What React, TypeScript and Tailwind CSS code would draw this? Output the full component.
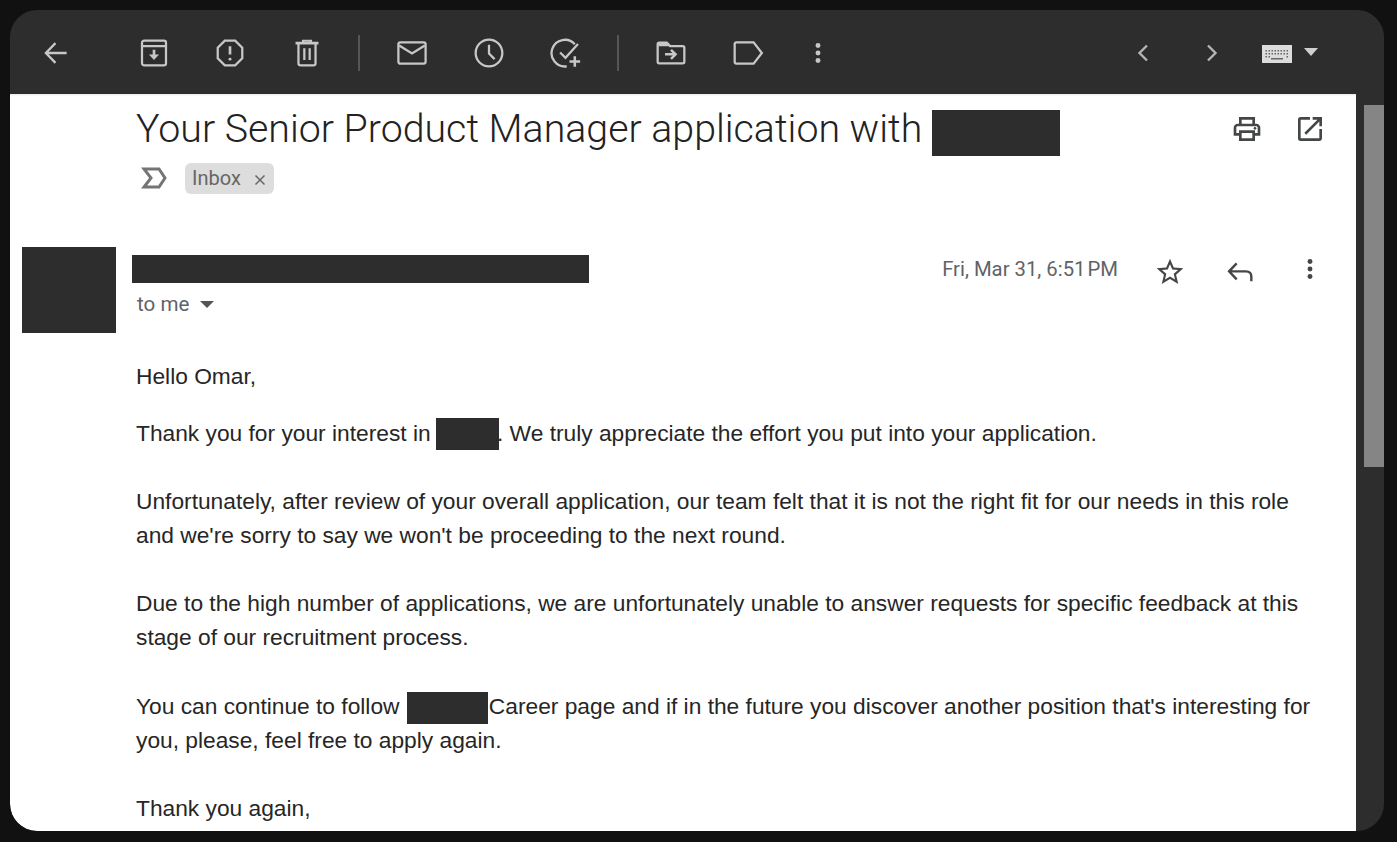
import React from "react";

const S = ({ children, size = 32, className = "" }: { children: React.ReactNode; size?: number; className?: string }) => (
  <svg width={size} height={size} viewBox="0 0 24 24" fill="none" stroke="currentColor" strokeWidth={1.7} className={className}>
    {children}
  </svg>
);

const Btn = ({ children }: { children: React.ReactNode }) => (
  <div className="w-[77px] h-[32px] flex items-center justify-center shrink-0">{children}</div>
);

const Sep = () => <div className="w-[2px] h-[36px] bg-[#565656] shrink-0" />;

const Dots = ({ fill = "currentColor" }: { fill?: string }) => (
  <svg width="32" height="32" viewBox="0 0 24 24" fill={fill}>
    <circle cx="12" cy="6.4" r="1.85" />
    <circle cx="12" cy="12" r="1.85" />
    <circle cx="12" cy="17.6" r="1.85" />
  </svg>
);

const Redact = ({ className }: { className: string }) => <span className={"bg-[#2d2d2d] " + className} />;

export default function App() {
  return (
    <div className="h-screen bg-[#111111] pt-[10px] pl-[10px] pr-[13px] pb-[11px] overflow-hidden">
      <div className="h-full rounded-[27px] overflow-hidden flex flex-col bg-[#2d2d2d]">
        <div className="h-[84px] shrink-0 flex items-center pl-[7.5px] pr-[66px] text-[#c7c7c7] pt-[2px]">
          <Btn>
            <S><path d="M20 12H4.6M11.6 4.6 4.4 12l7.2 7.4" /></S>
          </Btn>
          <div className="w-[20px] shrink-0" />
          <Btn>
            <S className="translate-x-[1px]">
              <rect x="3" y="2.8" width="18" height="18.4" rx="1.6" />
              <path d="M3 6.8h18" />
              <path d="M12 9.6v6" strokeWidth={2} />
              <path d="M8.2 13.2h7.6L12 17.2z" fill="currentColor" stroke="none" />
            </S>
          </Btn>
          <Btn>
            <S>
              <path d="M8.1 2.8h7.8l5.3 5.3v7.8l-5.3 5.3H8.1l-5.3-5.3V8.1z" />
              <path d="M12 7v6.2" strokeWidth={2} />
              <circle cx="12" cy="16.6" r="1.1" fill="currentColor" stroke="none" />
            </S>
          </Btn>
          <Btn>
            <S>
              <path d="M3.4 4.6h17.2" strokeWidth={2} />
              <path d="M9 4.4V2.8h6v1.6" strokeWidth={1.6} />
              <path d="M5.6 5v14.6c0 .9.7 1.6 1.6 1.6h9.6c.9 0 1.6-.7 1.6-1.6V5" />
              <path d="M10 8.4v8.8M14 8.4v8.8" />
            </S>
          </Btn>
          <div className="w-[12px] shrink-0" />
          <Sep />
          <div className="w-[14px] shrink-0" />
          <Btn>
            <S>
              <rect x="1.8" y="4" width="20.4" height="16" rx="1.4" />
              <path d="M2.4 6.4 12 12.4l9.6-6" />
            </S>
          </Btn>
          <Btn>
            <S>
              <circle cx="12" cy="12" r="10" />
              <path d="M12 5.8v6.6l4.2 4.2" />
            </S>
          </Btn>
          <Btn>
            <S>
              <path d="M18.6 5.4A10 10 0 1 0 12.6 22" />
              <path d="m7.6 11.6 4 4L21 5.2" />
              <path d="M18.6 14.4v8M14.6 18.4h8" strokeWidth={1.9} />
            </S>
          </Btn>
          <div className="w-[12px] shrink-0" />
          <Sep />
          <div className="w-[14px] shrink-0" />
          <Btn>
            <S>
              <path d="M2 18.6V5.4c0-.7.5-1.2 1.2-1.2h5.6l2.6 2.6h9.4c.7 0 1.2.5 1.2 1.2v10.6c0 .7-.5 1.2-1.2 1.2H3.2C2.5 19.8 2 19.3 2 18.6z" />
              <path d="M2.6 4.5h6.2l2.4 2.4H2.6z" fill="currentColor" stroke="none" />
              <path d="M7.5 13h7" strokeWidth={1.9} />
              <path d="m12 9.6 3.4 3.4-3.4 3.4" strokeWidth={1.9} />
            </S>
          </Btn>
          <Btn>
            <S>
              <path d="M2 5.4C2 4.6 2.6 4 3.4 4h12.8L22.4 12l-6.2 8H3.4C2.6 20 2 19.4 2 18.6z" />
            </S>
          </Btn>
          <div className="ml-[15px] w-[32px] flex justify-center shrink-0"><Dots /></div>
          <div className="flex-1" />
          <svg width="16" height="20" viewBox="0 0 16 20" fill="none" stroke="#b4b4b4" strokeWidth="2.4">
            <path d="M12 2.5 4.5 10l7.5 7.5" />
          </svg>
          <div className="w-[53px]" />
          <svg width="16" height="20" viewBox="0 0 16 20" fill="none" stroke="#b4b4b4" strokeWidth="2.4">
            <path d="M4 2.5 11.5 10 4 17.5" />
          </svg>
          <div className="w-[42px]" />
          <svg width="30" height="18" viewBox="0 0 30 18" className="mt-[1px]">
            <rect width="30" height="18" fill="#dcdcdc" />
            <g fill="#666666">
              <path d="M3.5 5H5v1.5H3.5zM6.5 5H8v1.5H6.5zM9.5 5H11v1.5H9.5zM12.5 5H14v1.5h-1.5zM15.5 5H17v1.5h-1.5zM18.5 5H20v1.5h-1.5zM21.5 5H23v1.5h-1.5zM24.5 5H26v1.5h-1.5z" />
              <path d="M3.5 8H5v1.5H3.5zM6.5 8H8v1.5H6.5zM9.5 8H11v1.5H9.5zM12.5 8H14v1.5h-1.5zM15.5 8H17v1.5h-1.5zM18.5 8H20v1.5h-1.5zM21.5 8H23v1.5h-1.5zM24.5 8H26v1.5h-1.5z" />
              <path d="M3.5 11H5v1.5H3.5zM6.5 11H8v1.5H6.5zM9 13h12v1.5H9zM24.5 11H26v1.5h-1.5z" />
            </g>
          </svg>
          <div className="w-[12px]" />
          <svg width="14" height="8" viewBox="0 0 14 8" fill="#d0d0d0" className="mb-[3px]">
            <path d="M0 0h14L7 8z" />
          </svg>
        </div>

        <div className="flex-1 flex min-h-0">
          <div className="flex-1 bg-white rounded-bl-[27px] overflow-hidden relative shadow-[inset_0_3px_3px_-3px_rgba(0,0,0,0.2)]">
            <div className="pl-[126px] pr-[30px] pt-[16px] flex items-start font-['Roboto',sans-serif]">
              <div className="flex items-center text-[39.3px] leading-[38px] font-light text-[#222222] flex-1 whitespace-nowrap">
                <span className="pb-[8px]">Your Senior Product Manager application with</span>
                <Redact className="inline-block w-[128px] h-[46px] ml-[10px]" />
              </div>
              <div className="flex items-center gap-[31px] text-[#444746] pt-[3px]">
                <svg width="32" height="32" viewBox="0 0 24 24" fill="currentColor">
                  <path d="M19 8h-1V3H6v5H5c-1.66 0-3 1.34-3 3v6h4v4h12v-4h4v-6c0-1.66-1.34-3-3-3zM8 5h8v3H8V5zm8 12v2H8v-4h8v2zm2-2v-2H6v2H4v-4c0-.55.45-1 1-1h14c.55 0 1 .45 1 1v4h-2z" />
                  <circle cx="18" cy="11.5" r="1" />
                </svg>
                <svg width="32" height="32" viewBox="0 0 24 24" fill="currentColor">
                  <path d="M19 19H5V5h7V3H5a2 2 0 0 0-2 2v14a2 2 0 0 0 2 2h14c1.1 0 2-.9 2-2v-7h-2v7zM14 3v2h3.59l-9.83 9.83 1.41 1.41L19 6.41V10h2V3h-7z" />
                </svg>
              </div>
            </div>

            <div className="pl-[131px] flex items-center mt-[6px] h-[32px]">
              <svg width="28" height="24" viewBox="0 0 28 24" fill="none" stroke="#757575" strokeWidth="3">
                <path d="M3 3h15l6 9-6 9H3l7-9z" />
              </svg>
              <div className="ml-[16px] h-[31px] w-[89px] rounded-[6px] bg-[#dddddd] flex items-center pl-[7px] text-[#666666] font-['Roboto',sans-serif] text-[20px]">
                <span>Inbox</span>
                <svg width="12" height="12" viewBox="0 0 12 12" stroke="#666666" strokeWidth="1.5" className="ml-[13px] mt-[3px]">
                  <path d="M1.5 1.5l9 9M10.5 1.5l-9 9" />
                </svg>
              </div>
            </div>

            <div className="flex mt-[53px] pl-[12px]">
              <Redact className="block w-[94px] h-[86px] shrink-0" />
              <div className="ml-[16px] flex-1">
                <div className="flex items-start">
                  <div className="flex-1">
                    <Redact className="block w-[457px] h-[28px] mt-[8px]" />
                    <div className="flex items-center ml-[5px] mt-[9px] h-[24px] text-[#5f6368] font-['Roboto',sans-serif] text-[20.6px]">
                      <span>to me</span>
                      <svg width="14" height="7" viewBox="0 0 14 7" fill="#555555" className="ml-[11px] mt-[1px]">
                        <path d="M0 0h14L7 7z" />
                      </svg>
                    </div>
                  </div>
                  <div className="flex items-center pr-[30px] pt-[5px] text-[#444746]">
                    <span className="text-[20.3px] text-[#5f6368] font-['Roboto',sans-serif] mr-[36px] mb-[2px]">Fri, Mar 31, 6:51<span className="ml-[2px]">PM</span></span>
                    <svg width="32" height="32" viewBox="0 0 24 24" fill="currentColor" className="mt-[4px]">
                      <path d="M22 9.24l-7.19-.62L12 2 9.19 8.63 2 9.24l5.46 4.73L5.82 21 12 17.27 18.18 21l-1.63-7.03L22 9.24zM12 15.4l-3.76 2.27 1-4.28-3.32-2.88 4.38-.38L12 6.1l1.71 4.04 4.38.38-3.32 2.88 1 4.28L12 15.4z" />
                    </svg>
                    <svg width="32" height="32" viewBox="0 0 24 24" fill="none" stroke="currentColor" strokeWidth="1.8" className="ml-[38px] mt-[3px]">
                      <path d="M20.5 19v-3.5c0-2.5-1.5-4-4-4H4M9.5 5.500 3.8 11.5l5.7 6" />
                    </svg>
                    <div className="ml-[38px] mb-[2px]"><Dots /></div>
                  </div>
                </div>
              </div>
            </div>

            <div className="pl-[126px] pr-[40px] mt-[26px] font-['Liberation_Sans',Arial,sans-serif] text-[22.75px] leading-[34px] text-[#262626]">
              <p>Hello Omar,</p>
              <p className="mt-[23px]">
                Thank you for your interest in{" "}
                <Redact className="inline-block w-[63px] h-[32px] align-[-9px] -ml-[1px] -mr-[2px]" />
                . We truly appreciate the effort you put into your application.
              </p>
              <p className="mt-[34px]">
                Unfortunately, after review of your overall application, our team felt that it is not the right fit for our needs in this role and we're sorry to say we won't be proceeding to the next round.
              </p>
              <p className="mt-[34px]">
                Due to the high number of applications, we are unfortunately unable to answer requests for specific feedback at this stage of our recruitment process.
              </p>
              <p className="mt-[35px]">
                You can continue to follow{" "}
                <Redact className="inline-block w-[81px] h-[32px] align-[-9px] translate-y-[1px] ml-[1px] mr-[1px]" />
                Career page and if in the future you discover another position that's interesting for you, please, feel free to apply again.
              </p>
              <p className="mt-[34px]">Thank you again,</p>
            </div>
          </div>

          <div className="w-[28px] shrink-0 pl-[8px] pt-[11px]">
            <div className="h-[362px] bg-[#858585]" />
          </div>
        </div>
      </div>
    </div>
  );
}
